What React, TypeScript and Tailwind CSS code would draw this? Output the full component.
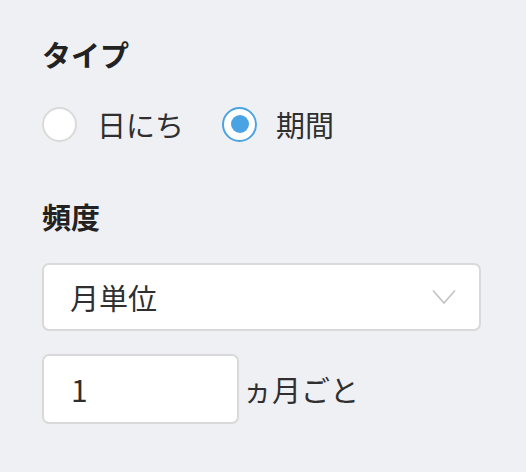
export default function App() {
  const font = { fontFamily: '"Noto Sans CJK JP", "Noto Sans", sans-serif' };
  return (
    <div className="min-h-[472px] w-[526px] bg-[#eff0f4] pl-[42px] pt-[36px] text-[#2f2f2f]" style={font}>
      <div className="flex h-[36px] items-center text-[29px] font-bold leading-none text-[#222]">タイプ</div>

      <div className="mt-[34px] flex h-[36px] items-center">
        <span className="h-[35px] w-[35px] rounded-full border-2 border-[#dadada] bg-white" />
        <span className="ml-[20px] text-[29px] leading-none">日にち</span>
        <span className="ml-[38px] flex h-[35px] w-[35px] items-center justify-center rounded-full border-2 border-[#4aa3e3] bg-white">
          <span className="h-[18px] w-[18px] rounded-full bg-[#4aa3e3]" />
        </span>
        <span className="ml-[19px] text-[29px] leading-none">期間</span>
      </div>

      <div className="mt-[56px] flex h-[36px] items-center text-[29px] font-bold leading-none text-[#222]">頻度</div>

      <div className="mt-[29px] flex h-[68px] w-[439px] items-center justify-between rounded-[7px] border-2 border-[#d9d9d9] bg-white pl-[26px] pr-[23px]">
        <span className="text-[29px] leading-none">月単位</span>
        <svg width="24" height="16" viewBox="0 0 24 16" fill="none">
          <path d="M1 1.5 L12 14 L23 1.5" stroke="#c2c2c2" strokeWidth="1.6" />
        </svg>
      </div>

      <div className="mt-[23px] flex items-center">
        <div className="flex h-[70px] w-[197px] items-center rounded-[7px] border-2 border-[#d9d9d9] bg-white pl-[27px]">
          <span className="text-[30px] leading-none">1</span>
        </div>
        <span className="ml-[4px] text-[29px] leading-none">ヵ月ごと</span>
      </div>
    </div>
  );
}
